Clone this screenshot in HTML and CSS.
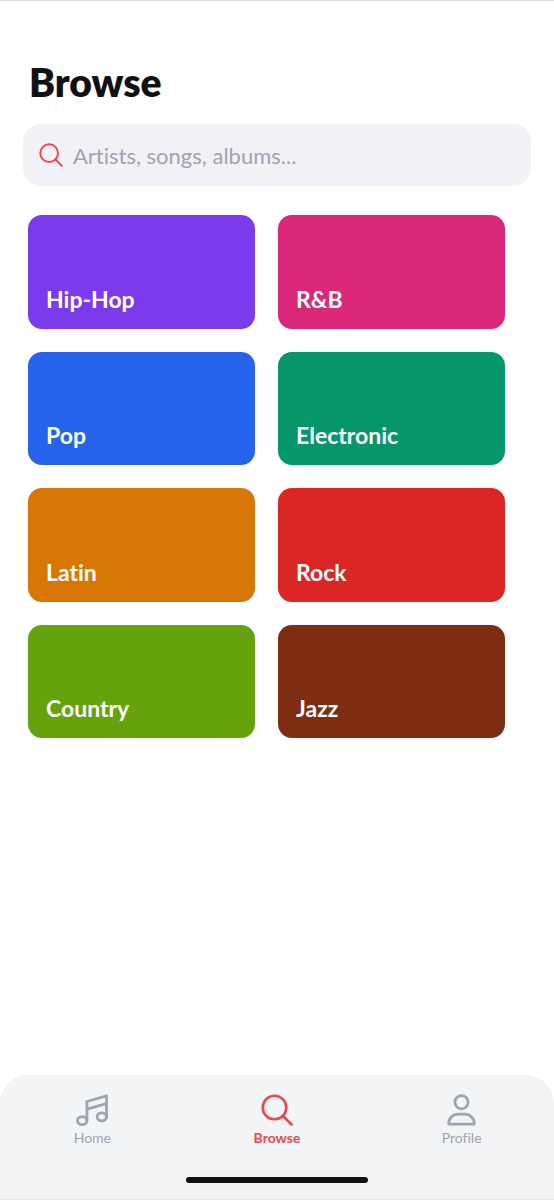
FILE: index.html
```html
<!DOCTYPE html>
<html lang="en">
<head>
<meta charset="utf-8">
<meta name="viewport" content="width=device-width, initial-scale=1">
<title>Browse</title>
<link rel="stylesheet" href="styles.css">
</head>
<body class="app">
<main class="content">
  <h1 class="title">Browse</h1>
  <label class="search">
    <svg class="search-icon" viewBox="0 0 32 32" fill="none" stroke="currentColor" stroke-width="2.6" stroke-linecap="round" aria-hidden="true"><circle cx="13.5" cy="13.5" r="11.8"/><path d="M22 22 30.5 30.5"/></svg>
    <input class="search-input" type="search" aria-label="Search" placeholder="Artists, songs, albums...">
  </label>
  <div class="genres">
    <button class="genre hiphop" type="button">Hip-Hop</button>
    <button class="genre rnb" type="button">R&amp;B</button>
    <button class="genre pop" type="button">Pop</button>
    <button class="genre electronic" type="button">Electronic</button>
    <button class="genre latin" type="button">Latin</button>
    <button class="genre rock" type="button">Rock</button>
    <button class="genre country" type="button">Country</button>
    <button class="genre jazz" type="button">Jazz</button>
  </div>
</main>
<footer class="bottom">
  <nav class="tabs">
    <a class="tab" href="#home">
      <svg class="tab-icon" viewBox="0 0 32 32" fill="none" stroke="currentColor" stroke-width="2.8" stroke-linejoin="round" stroke-linecap="round" aria-hidden="true"><ellipse cx="6.2" cy="26.700" rx="4.700" ry="4"/><ellipse cx="25.800" cy="22.800" rx="4.700" ry="4"/><path d="M10.900 26.700V7.500L30.500 1.800v21M10.900 15.200l19.600-5.500"/></svg>
      Home
    </a>
    <a class="tab active" href="#browse" aria-current="page">
      <svg class="tab-icon" viewBox="0 0 32 32" fill="none" stroke="currentColor" stroke-width="2.6" stroke-linecap="round" aria-hidden="true"><circle cx="13.5" cy="13.5" r="11.8"/><path d="M22 22 30.5 30.5"/></svg>
      Browse
    </a>
    <a class="tab" href="#profile">
      <svg class="tab-icon" viewBox="0 0 32 32" fill="none" stroke="currentColor" stroke-width="2.8" stroke-linejoin="round" aria-hidden="true"><circle cx="15.500" cy="8.200" r="6.600"/><path d="M2.800 30.200h25.400c.5-5.700-4.200-10-9.600-10h-6.200c-5.400 0-10.100 4.300-9.600 10z"/></svg>
      Profile
    </a>
  </nav>
  <div class="home-indicator"></div>
</footer>
</body>
</html>
```
FILE: styles.css
```css
* {
  box-sizing: border-box;
}

.app {
  margin: 0;
  min-height: 100vh;
  display: flex;
  flex-direction: column;
  border-top: 1px solid #dcdcde;
  background: #fff;
  font-family: Lato, "Liberation Sans", sans-serif;
  font-variant-ligatures: none;
}

.content {
  flex: 1;
  padding-top: 57px;
}

.title {
  margin: 0 29px;
  font-size: 39px;
  line-height: 48px;
  font-weight: 800;
  color: #111113;
}

.search {
  display: flex;
  align-items: center;
  gap: 10px;
  height: 62px;
  margin: 18px 23px 0;
  padding: 0 16px;
  border-radius: 18px;
  background: #f2f1f6;
}

.search-icon {
  flex: none;
  width: 24px;
  height: 24px;
  color: #e8494d;
}

.search-input {
  flex: 1;
  min-width: 0;
  padding: 2px 0 0;
  border: 0;
  outline: 0;
  background: none;
  font: inherit;
  font-size: 22px;
  line-height: 28px;
  font-variant-ligatures: none;
  color: #111113;
}

.search-input::placeholder {
  color: #9ea4b1;
  opacity: 1;
}

.genres {
  display: grid;
  grid-template-columns: 1fr 1fr;
  gap: 23px;
  padding: 29px 49px 28px 28px;
}

.genre {
  display: flex;
  align-items: flex-end;
  aspect-ratio: 2 / 1;
  padding: 0 18px 16px;
  border: 0;
  border-radius: 14px;
  font: inherit;
  font-size: 23px;
  line-height: 28px;
  font-weight: 700;
  font-variant-ligatures: none;
  text-align: left;
  color: #fff;
}

.hiphop { background: #7c3aed; }
.rnb { background: #db2777; }
.pop { background: #2563eb; }
.electronic { background: #059669; }
.latin { background: #d97706; }
.rock { background: #dc2626; }
.country { background: #65a30d; }
.jazz { background: #7c2d12; }

.bottom {
  padding: 19px 0 16px;
  border-bottom: 1px solid #e3e5e8;
  border-radius: 28px 28px 0 0;
  background: #f2f4f6;
}

.tabs {
  display: grid;
  grid-template-columns: repeat(3, 1fr);
}

.tab {
  display: flex;
  flex-direction: column;
  align-items: center;
  gap: 3px;
  font-size: 14px;
  line-height: 18px;
  color: #9ea4b1;
  text-decoration: none;
}

.tab-icon {
  width: 32px;
  height: 32px;
}

.active {
  font-weight: 700;
  color: #e8494d;
}

.home-indicator {
  width: 182px;
  height: 6px;
  margin: 30px auto 0;
  border-radius: 3px;
  background: #111113;
}
```
